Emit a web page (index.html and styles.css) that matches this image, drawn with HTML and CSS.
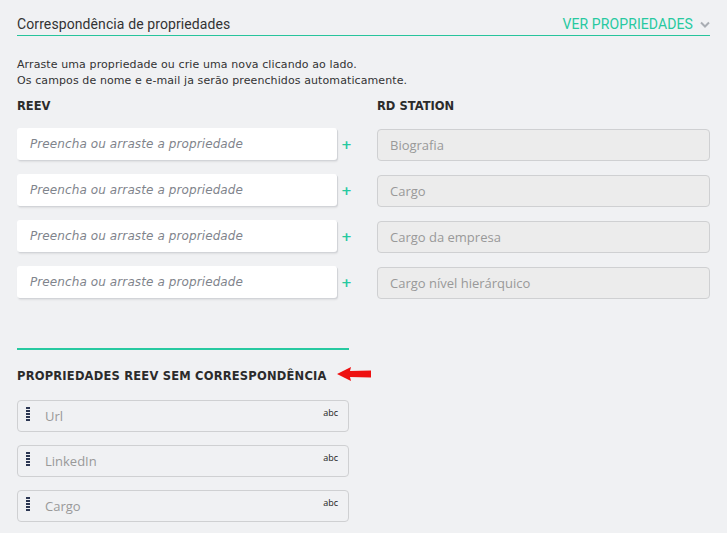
FILE: index.html
```html
<!DOCTYPE html>
<html lang="pt">
<head>
<meta charset="utf-8">
<link rel="stylesheet" href="styles.css">
</head>
<body>
<div class="page">
  <div class="header">
    <span class="header-title">Correspondência de propriedades</span>
    <span class="header-link">VER PROPRIEDADES
      <svg class="chev" width="10" height="7" viewBox="0 0 10 7"><path d="M1 1.5 L5 5.5 L9 1.5" fill="none" stroke="#a9adb3" stroke-width="2"/></svg>
    </span>
  </div>
  <p class="desc">Arraste uma propriedade ou crie uma nova clicando ao lado.<br>Os campos de nome e e-mail ja serão preenchidos automaticamente.</p>
  <div class="grid">
    <div class="col">
      <div class="label">REEV</div>
      <div class="rows">
        <div class="row"><div class="input">Preencha ou arraste a propriedade</div><span class="plus">+</span></div>
        <div class="row"><div class="input">Preencha ou arraste a propriedade</div><span class="plus">+</span></div>
        <div class="row"><div class="input">Preencha ou arraste a propriedade</div><span class="plus">+</span></div>
        <div class="row"><div class="input">Preencha ou arraste a propriedade</div><span class="plus">+</span></div>
      </div>
    </div>
    <div class="col">
      <div class="label">RD STATION</div>
      <div class="rows rows-right">
        <div class="field">Biografia</div>
        <div class="field">Cargo</div>
        <div class="field">Cargo da empresa</div>
        <div class="field">Cargo nível hierárquico</div>
      </div>
    </div>
  </div>
  <div class="unmatched">
    <div class="divider"></div>
    <div class="title-row">
      <span class="label">PROPRIEDADES REEV SEM CORRESPONDÊNCIA</span>
      <svg class="arrow" width="34" height="14" viewBox="0 0 34 14"><path d="M0 7 L14 0 L13 4 L34 3.5 L34 10.5 L13 10 L14 14 Z" fill="#ee1111"/></svg>
    </div>
    <div class="items">
      <div class="item"><span class="handle"></span><span class="item-name">Url</span><span class="type">abc</span></div>
      <div class="item"><span class="handle"></span><span class="item-name">LinkedIn</span><span class="type">abc</span></div>
      <div class="item"><span class="handle"></span><span class="item-name">Cargo</span><span class="type">abc</span></div>
    </div>
  </div>
</div>
</body>
</html>
```

FILE: styles.css
```css
* { box-sizing: border-box; }
html, body { margin: 0; background: #f0f1f3; }
body { font-family: "DejaVu Sans", sans-serif; color: #333; }
.page { width: 693px; margin-left: 17px; padding-top: 15px; }
.header {
  display: flex; justify-content: space-between; align-items: center;
  border-bottom: 1.5px solid #27c49c;
  padding-bottom: 2px; height: 21px;
}
.header-title { font-family: Roboto, sans-serif; font-size: 14px; color: #333; letter-spacing: 0.1px; }
.header-link { font-family: Roboto, sans-serif; font-size: 14px; color: #27c9a0; display: flex; align-items: center; gap: 7px; letter-spacing: 0.1px; }
.chev { display: block; }
.desc { font-size: 11px; line-height: 16px; margin: 21px 0 0; color: #333; letter-spacing: 0.1px; }
.grid { display: grid; grid-template-columns: 332px 333px; column-gap: 28px; margin-top: 10px; }
.label { font-size: 11.5px; font-weight: bold; color: #2b2b2b; white-space: nowrap; }
.rows { display: flex; flex-direction: column; gap: 14px; margin-top: 15px; }
.rows-right { padding-top: 1px; }
.row { display: flex; align-items: center; height: 32px; }
.input {
  flex-shrink: 0;
  width: 320px; height: 32px; background: #fff; border-radius: 3px;
  box-shadow: 1px 1px 0 #d2d4d8, 1px 2px 2px rgba(0,0,0,0.08);
  font-style: italic; font-size: 12px; color: #7f848c; padding: 0 13px;
  display: flex; align-items: center; letter-spacing: 0.1px;
}
.plus { flex-shrink: 0; width: 10px; margin-left: 4px; text-align: center; color: #27c9a0; font-weight: bold; font-size: 13px; }
.field {
  height: 32px; background: #ececec; border: 1px solid #cfd0d2; border-radius: 4px;
  font-family: "Open Sans", sans-serif; font-size: 13px; color: #999; padding: 0 12px;
  display: flex; align-items: center;
}
.unmatched { width: 332px; margin-top: 49px; }
.divider { height: 1.5px; background: #27c9a0; }
.title-row { display: flex; align-items: center; gap: 10px; margin-top: 19px; }
.title-row .label { flex-shrink: 0; font-size: 11.5px; letter-spacing: 0.2px; }
.arrow { flex-shrink: 0; display: block; margin-top: -4px; }
.items { display: flex; flex-direction: column; gap: 13px; margin-top: 17px; }
.item {
  height: 32px; border: 1px solid #cfd0d2; border-radius: 4px; background: #f0f1f3;
  display: flex; align-items: center; padding: 0 10px 0 8px;
}
.handle {
  width: 4px; height: 14px; margin-top: -3px;
  background: repeating-linear-gradient(to bottom, #2c3752 0 2px, transparent 2px 3px);
}
.item-name { flex: 1; margin-left: 15px; font-family: "Open Sans", sans-serif; font-size: 13px; color: #999; }
.type { font-family: "Open Sans", sans-serif; font-size: 9px; color: #222; margin-top: -6px; }
```
